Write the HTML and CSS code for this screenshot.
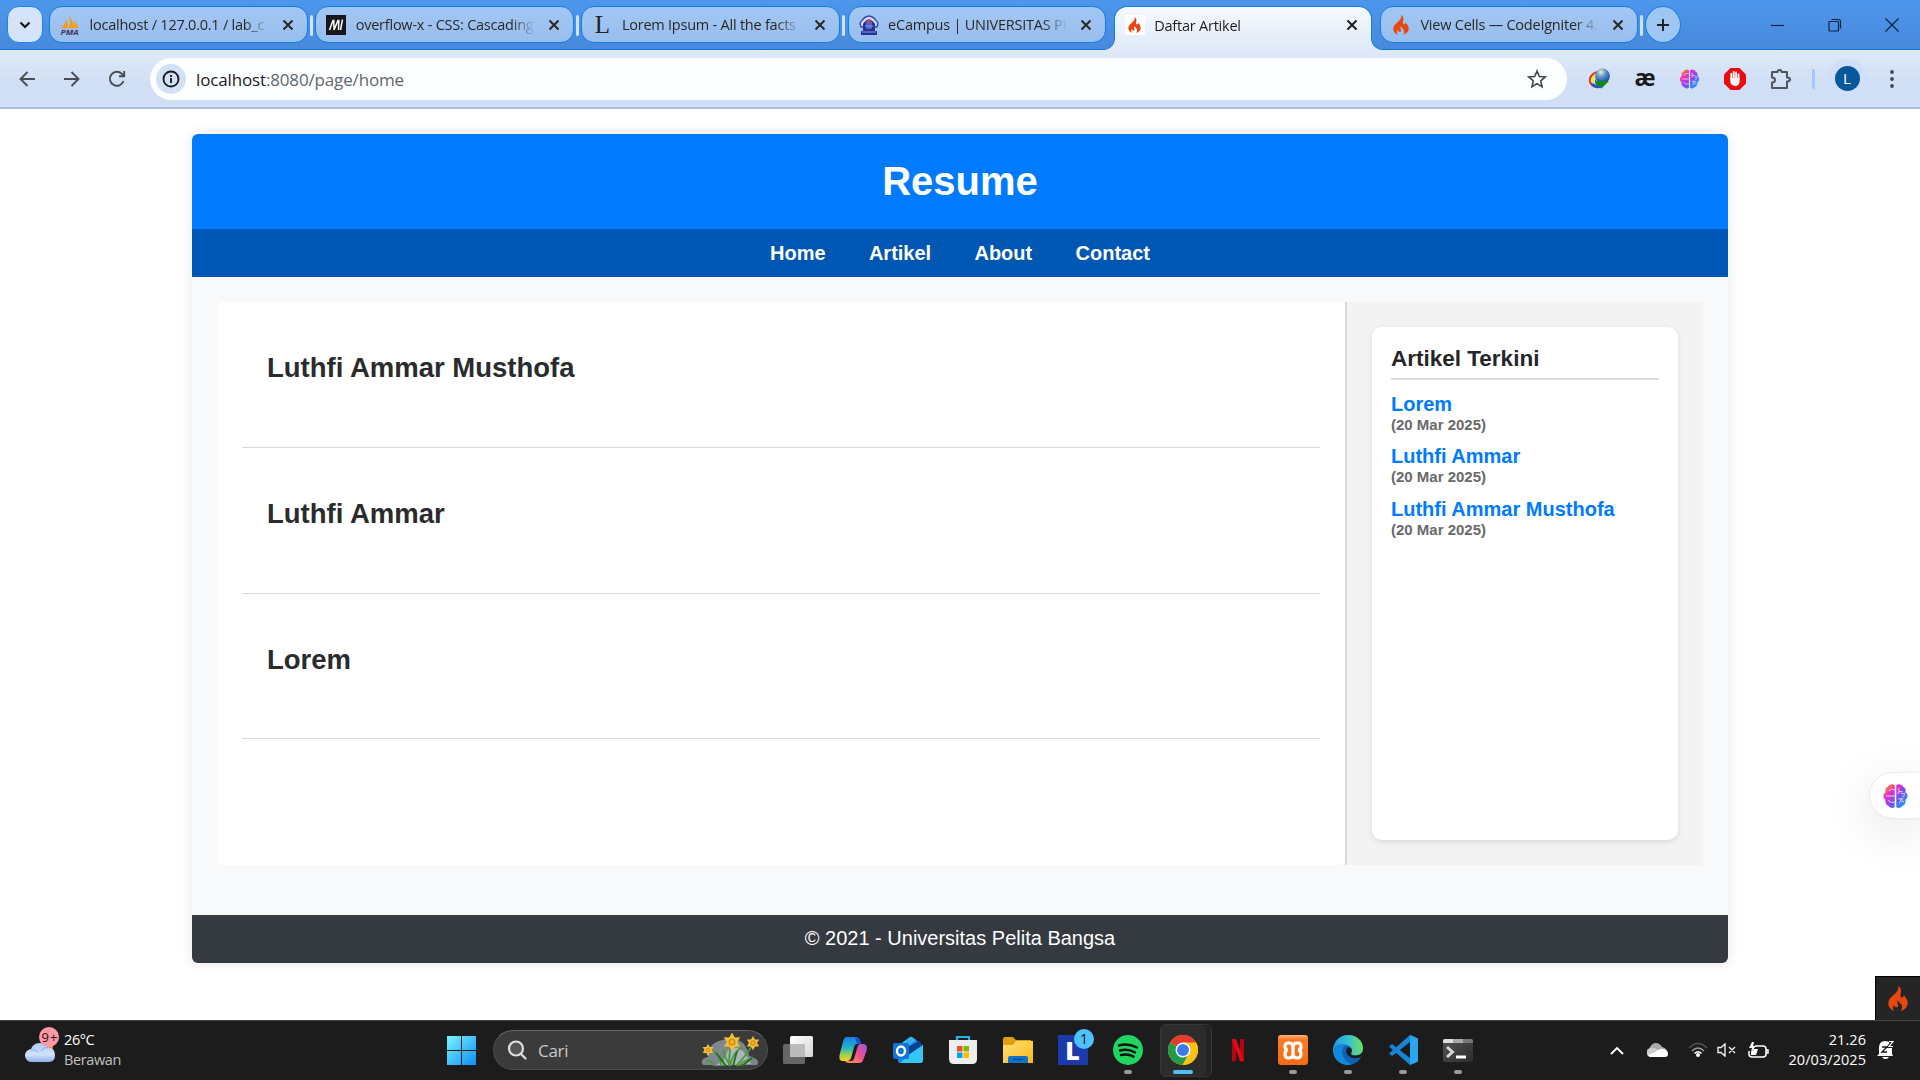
FILE: index.html
```html
<!DOCTYPE html>
<html lang="id">
<head>
<meta charset="utf-8">
<title>Daftar Artikel</title>
<link rel="stylesheet" href="styles.css">
</head>
<body>
<svg class="defs" width="0" height="0">
  <defs>
    <linearGradient id="gBrain" x1="0" y1="0" x2="1" y2="1"><stop offset=".1" stop-color="#ff8a1c"/><stop offset=".3" stop-color="#ee2fc4"/><stop offset=".58" stop-color="#7a4df0"/><stop offset=".9" stop-color="#12a4ff"/></linearGradient>
    <linearGradient id="gWin" x1="0" y1="0" x2="1" y2="1"><stop offset="0" stop-color="#7df3ff"/><stop offset="1" stop-color="#0a8ff5"/></linearGradient>
    <linearGradient id="gCloud" x1="0" y1="0" x2="0" y2="1"><stop offset="0" stop-color="#a9c8f8"/><stop offset=".6" stop-color="#d3e4fb"/><stop offset="1" stop-color="#8fb0ec"/></linearGradient>
    <linearGradient id="gFolder" x1="0" y1="0" x2="1" y2="1"><stop offset="0" stop-color="#ffe07a"/><stop offset="1" stop-color="#fbb917"/></linearGradient>
    <linearGradient id="gCopA" x1="0" y1="0" x2="0" y2="1"><stop offset="0" stop-color="#1a7fe8"/><stop offset=".45" stop-color="#22b5c9"/><stop offset=".75" stop-color="#9bd24a"/><stop offset="1" stop-color="#ffcf1e"/></linearGradient>
    <linearGradient id="gCopB" x1="1" y1="0" x2="0" y2="1"><stop offset="0" stop-color="#9a56ee"/><stop offset=".5" stop-color="#ee4f90"/><stop offset="1" stop-color="#ff9a50"/></linearGradient>
    <linearGradient id="gEdge" x1="0" y1="0" x2="1" y2="0"><stop offset="0" stop-color="#2398e0"/><stop offset=".5" stop-color="#35c1d4"/><stop offset="1" stop-color="#6ee05a"/></linearGradient>
    <linearGradient id="gXampp" x1="0" y1="0" x2="0" y2="1"><stop offset="0" stop-color="#ffb37a"/><stop offset=".15" stop-color="#fb7a24"/><stop offset="1" stop-color="#f46b12"/></linearGradient>
    <linearGradient id="gTerm" x1="0" y1="0" x2="1" y2="1"><stop offset="0" stop-color="#555"/><stop offset="1" stop-color="#2c2c2c"/></linearGradient>
    <linearGradient id="gView" x1="0" y1="0" x2="1" y2="1"><stop offset="0" stop-color="#fff"/><stop offset="1" stop-color="#d5d5d5"/></linearGradient>
    <radialGradient id="gGlobe" cx=".4" cy=".25" r=".8"><stop offset="0" stop-color="#f1f2b0"/><stop offset=".4" stop-color="#5d93d2"/><stop offset="1" stop-color="#123c8c"/></radialGradient>
    <symbol id="x" viewBox="0 0 12 12"><path d="M1.5 1.5l9 9M10.5 1.5l-9 9" fill="none" stroke="currentColor" stroke-width="2"/></symbol>
    <symbol id="flame" viewBox="0 0 20 25"><path d="M10.2 0C11 4.6 8.2 6.5 5 9.6 2 12.500.3 14.200.3 17.300.3 20.800 2.600 23.600 6.300 25 4.400 22.800 4.600 20.600 6.200 18.900c.2 1.600 1.100 2.400 2.200 2.400 2-.1 2.200-2 1.300-3.600-.6-1.200-.5-2.300.2-3.500.7 1.800 1.900 2.400 3.100 3.900 1.600 2 1.500 4.700-.4 6.900 4.200-1.400 7.100-4.100 7.100-8 0-2.900-1.700-5-4-7.900.1 1.200-.3 2.100-1.300 2.400-1.600.3-2.100-1-1.900-2.500C13 6 14 2.600 10.200 0z" fill="#e8480f"/></symbol>
    <symbol id="brain" viewBox="0 0 26 26"><path d="M12.200 1.500C10 0 6 .5 5 3.500 2.500 4.500 2 7 2.800 9-.3 11-.3 15 2.600 17c-.6 4 1.400 5.500 3 6.200C7.500 26 11 26 12.200 24.500zM13.800 1.500C16 0 20 .5 21 3.500c2.500 1 3 3.500 2.200 5.500 3.100 2 3.100 6 .2 8 .6 4-1.400 5.500-3 6.200-1.900 2.800-5.400 2.800-6.600 1.300z" fill="url(#gBrain)"/><path d="M12 6H8.500L6 8M3 13h9M5.500 17.500l2.500 2h4M16.500 5v3.500h4M17 8.500L15.500 11M19 10.500h4M20 14l3-2M16 16h5M19 16l-2 5M19 18l3 1" fill="none" stroke="#fff" stroke-width="1" opacity=".8"/></symbol>
    <g id="flower"><g fill="#f2c13a"><path d="M0 0L-3-4 0-9.500 3-4z"/><path d="M0 0L-3-4 0-9.500 3-4z" transform="rotate(60)"/><path d="M0 0L-3-4 0-9.500 3-4z" transform="rotate(120)"/><path d="M0 0L-3-4 0-9.500 3-4z" transform="rotate(180)"/><path d="M0 0L-3-4 0-9.500 3-4z" transform="rotate(240)"/><path d="M0 0L-3-4 0-9.500 3-4z" transform="rotate(300)"/></g><circle r="3.600" fill="#d98a14"/><circle r="1.900" fill="#f0b535"/></g>
  </defs>
</svg>

<header class="browser">
  <div class="tabstrip">
    <button class="tab-search"><svg width="12" height="8" viewBox="0 0 12 8"><path d="M1.500 1.500L6 6l4.500-4.500" fill="none" stroke="#111" stroke-width="2.200"/></svg></button>
    <nav class="tabs">
      <div class="tab"><svg class="fav" viewBox="0 0 20 21"><path d="M1 14Q5 10 6.500 4L8 14zM8.500 14Q11 7 9 0l7 14zM14 5q4 4 5 9h-3z" fill="#f89c0e"/><text x="0" y="20.500" class="pma" textLength="19" lengthAdjust="spacingAndGlyphs">PMA</text></svg><span class="label">localhost / 127.0.0.1 / lab_c</span><svg class="close"><use href="#x"/></svg></div>
      <div class="tab"><svg class="fav" viewBox="0 0 20 20"><rect width="20" height="20" fill="#15171c"/><path d="M3.500 15L7 5.500h.800L8 15l4-9.500h.800L12.500 15M16.500 4.500L14.500 15" fill="none" stroke="#fff" stroke-width="1.500"/></svg><span class="label">overflow-x - CSS: Cascading</span><svg class="close"><use href="#x"/></svg></div>
      <div class="tab"><span class="fav letter">L</span><span class="label">Lorem Ipsum - All the facts -</span><svg class="close"><use href="#x"/></svg></div>
      <div class="tab last"><svg class="fav" viewBox="0 0 20 20"><path d="M1 8Q10-6 19 8l-1 4H2z" fill="#d0d7ee" stroke="#3346a8" stroke-width="1.300"/><path d="M4 9q6-9 12 0v7h2v4H2v-4h2z" fill="#25309b"/><path d="M7 7q3-4 6 0v7H7z" fill="#5263bb"/><circle cx="10" cy="6" r="1.700" fill="#e33b3b"/><path d="M3 17h14M6 11h8" stroke="#8c9bdb"/></svg><span class="label">eCampus | UNIVERSITAS PELITA</span><svg class="close"><use href="#x"/></svg></div>
      <div class="tab active"><span class="fav white"><svg width="13" height="16"><use href="#flame"/></svg></span><span class="label">Daftar Artikel</span><svg class="close"><use href="#x"/></svg></div>
      <div class="tab"><svg class="fav"><use href="#flame"/></svg><span class="label">View Cells — CodeIgniter 4.6</span><svg class="close"><use href="#x"/></svg></div>
    </nav>
    <button class="new-tab"><svg width="14" height="14"><path d="M7 1v12M1 7h12" stroke="#222" stroke-width="2"/></svg></button>
    <div class="window-controls">
      <svg width="14" height="14"><path d="M0 7.500h13" stroke="#10233d" stroke-width="1.200"/></svg>
      <svg width="14" height="14" fill="none" stroke="#10233d" stroke-width="1.200"><rect x="1" y="3.500" width="9.500" height="9.500" rx="1"/><path d="M3.500 1.500h7q2 0 2 2v7"/></svg>
      <svg width="14" height="14"><path d="M.5 .5l13 13M13.500 .5l-13 13" stroke="#10233d" stroke-width="1.200"/></svg>
    </div>
  </div>
  <div class="toolbar">
    <div class="nav-icons">
      <svg width="20" height="20" viewBox="0 0 20 20"><path d="M18 10H4M10.500 3L3.500 10l7 7" class="ln"/></svg>
      <svg width="20" height="20" viewBox="0 0 20 20"><path d="M2 10h14M9.500 3l7 7-7 7" class="ln"/></svg>
      <svg width="20" height="20" viewBox="0 0 20 20"><path d="M16.500 12a7 7 0 1 1-1.600-7.100L17 7M17.200 2v5.200H12" class="ln"/></svg>
    </div>
    <div class="omnibox">
      <span class="info"><svg width="18" height="18" fill="none" stroke="#1b1d22" stroke-width="1.900"><circle cx="9" cy="9" r="7.500"/><path d="M9 8v5M9 5v2"/></svg></span>
      <span class="url">localhost<i>:8080/page/home</i></span>
      <svg width="20" height="20" viewBox="0 0 20 20"><path d="M10 2l2.300 5.500 5.900.5-4.500 3.900 1.400 5.800L10 14.600l-5.100 3.100 1.400-5.800L1.800 8l5.900-.5z" fill="none" stroke="#444950" stroke-width="1.600"/></svg>
    </div>
    <div class="extensions">
      <svg width="22" height="22" viewBox="0 0 22 22"><path d="M9 4C3 5 0 10 1 14q3 6 9 5" fill="none" stroke="#e02c1c" stroke-width="2"/><path d="M9 6C5 7 3 10 3 14" fill="none" stroke="#f7e51f" stroke-width="2.500"/><path d="M3 16q4 4 9 2" fill="none" stroke="#2056c8" stroke-width="3"/><circle cx="13.500" cy="8" r="7.400" fill="url(#gGlobe)"/><path d="M6 11q2 4 6 2h8l-8 8v-3q-7 1-6-7z" fill="#128a19"/></svg>
      <span class="ae">æ</span>
      <svg width="21" height="20"><use href="#brain"/></svg>
      <svg width="22" height="22" viewBox="0 0 22 22"><path d="M6.500 0h9L22 6.500v9L15.500 22h-9L0 15.500v-9z" fill="#e90d12"/><path d="M7.300 12V6M9.700 11V4M12.100 11V4.500M14.500 12V6.500" stroke="#fff" stroke-width="1.900" stroke-linecap="round"/><path d="M6.400 10h9.100v4q-.5 4-4.500 4-3 0-4.600-3z" fill="#fff"/></svg>
      <svg width="22" height="22" viewBox="0 0 22 22"><path d="M2 4h5.500q0-2 2-2t2 2H17v5.500q3 0 3 2t-3 2V20H2v-5.500q3 0 3-2.500T2 9.500z" fill="none" stroke="#50545b" stroke-width="2" stroke-linejoin="round"/></svg>
      <span class="divider"></span>
      <span class="avatar">L</span>
      <svg width="6" height="20"><g fill="#44484f"><circle cx="3" cy="3" r="1.900"/><circle cx="3" cy="10" r="1.900"/><circle cx="3" cy="17" r="1.900"/></g></svg>
    </div>
  </div>
</header>

<div class="viewport">
  <div class="container">
    <header class="site-header"><h1>Resume</h1></header>
    <nav class="site-nav"><a>Home</a><a>Artikel</a><a>About</a><a>Contact</a></nav>
    <section class="wrapper">
      <main class="main">
        <article class="entry"><h2>Luthfi Ammar Musthofa</h2></article>
        <article class="entry"><h2>Luthfi Ammar</h2></article>
        <article class="entry"><h2>Lorem</h2></article>
      </main>
      <aside class="sidebar">
        <div class="widget">
          <h3>Artikel Terkini</h3>
          <ul>
            <li><a>Lorem</a><small>(20 Mar 2025)</small></li>
            <li><a>Luthfi Ammar</a><small>(20 Mar 2025)</small></li>
            <li><a>Luthfi Ammar Musthofa</a><small>(20 Mar 2025)</small></li>
          </ul>
        </div>
      </aside>
    </section>
    <footer class="site-footer">© 2021 - Universitas Pelita Bangsa</footer>
  </div>
  <div class="assistant"><svg width="25" height="26"><use href="#brain"/></svg></div>
  <div class="debug"><svg width="20" height="25"><use href="#flame"/></svg></div>
</div>

<footer class="taskbar">
  <div class="weather">
    <svg width="34" height="37" viewBox="0 0 34 37"><circle cx="22" cy="20" r="6" fill="#f58a1f"/><path d="M7 35a6.500 6.500 0 0 1-1-13 9.500 9.500 0 0 1 17-1.500q7 0 7 8 0 6.500-6 6.500z" fill="url(#gCloud)"/><path d="M6 23q4-1 7 2M16 24q3-4 7-3.500" fill="none" stroke="#86a9e8"/><circle cx="24" cy="10" r="10" fill="#ff99a4"/><text x="16.500" y="15" class="nine" textLength="16">9+</text></svg>
    <div class="weather-text"><span>26°C</span><span class="muted">Berawan</span></div>
  </div>
  <div class="apps">
    <svg class="start" width="29" height="29"><path d="M0 0h14v14H0zM15 0h14v14H15zM0 15h14v14H0zM15 15h14v14H15z" fill="url(#gWin)"/></svg>
    <div class="search">
      <svg width="20" height="20" fill="none" stroke="#dcdfe3" stroke-width="2.200" stroke-linecap="round"><circle cx="9" cy="8.500" r="7" fill="#555"/><path d="M14 14l4.500 4.500"/></svg>
      <span>Cari</span>
      <svg class="bouquet" width="58" height="34" viewBox="0 0 58 34"><path d="M2 32q-4-6 5-8 0-14 14-17 14-4 22 4 5 8 5 12 12 3 8 9z" fill="#9fb0bb" opacity=".65"/><path d="M10 33q14-2 16-14Q38 6 50 31z" fill="#bccbd0" opacity=".7"/><g fill="none" stroke="#4b9b35" stroke-width="1.700"><path d="M28 33Q28 18 31 10M24 33Q20 20 7 17M35 33Q45 23 52 11M20 33q0-9-6-14M29 33q2-12 12-19M38 33q7-8 16-7M30 33Q22 23 23 17M15 33q-5-6-10-5"/></g><g stroke="#256c24" stroke-width="1.800"><path d="M25 33L15 20M32 33l4-15M41 33l10-8"/></g><use href="#flower" x="31" y="9"/><use href="#flower" transform="translate(7 17) scale(.65)"/><use href="#flower" transform="translate(52 10) scale(.75)"/></svg>
    </div>
    <div class="icons">
      <div class="app"><svg viewBox="0 0 30 30"><rect y="9" width="22" height="20" rx="1.500" fill="#666"/><rect x="7" y="1" width="23" height="21" rx="1.500" fill="url(#gView)"/><path d="M7 9h15v13H7z" fill="#bbb"/></svg></div>
      <div class="app"><svg viewBox="0 0 30 30"><path d="M8.500 2H18q3 0 4 4l1 3h-4q-2 0-2.600 2L13 23q-1 3-4 3H4q-4-1-2-8L5 7q1-5 3.500-5z" fill="url(#gCopA)"/><path d="M21.500 28H12q3-1 4-4l3.500-12q.5-3 3.500-3h3q4 1 2.500 7l-3 8q-1 4-4 4z" fill="url(#gCopB)"/><path d="M17 2q4 0 5 4l1 3h-4z" fill="#194fd0"/><path d="M7 26h6q2 0 3-2l-2 4H10q-2 0-3-2z" fill="#ff7d4d"/></svg></div>
      <div class="app"><svg viewBox="0 0 30 30"><path d="M5 11L17 2q1-.600 2 0l11 8v15q0 3-3 3H7q-2 0-2-2z" fill="#1887e8"/><path d="M6 10L17 2q1-.600 2 0l4 3-11 9z" fill="#35b3f0"/><path d="M13 13L26 6l4 4-15 10z" fill="#0a3f91"/><path d="M30 10v15q0 3-3 3H7l10-9z" fill="#36c6f5"/><rect y="8" width="16" height="16" rx="2" fill="#1074d6"/><ellipse cx="8" cy="16" rx="4" ry="4.500" fill="none" stroke="#fff" stroke-width="2.400"/></svg></div>
      <div class="app"><svg viewBox="0 0 30 30"><path d="M9 7V2h12v5" fill="none" stroke="#23b2ec" stroke-width="2.200"/><path d="M1 5h28v19q0 5-5 5H6q-5 0-5-5z" fill="#eee"/><path d="M9 5V3M21 5V3" stroke="#23b2ec" stroke-width="2"/><path d="M9 11h5.500v5.500H9z" fill="#f25022"/><path d="M15.500 11H21v5.500h-5.500z" fill="#7fba00"/><path d="M9 17.500h5.500V23H9z" fill="#00a4ef"/><path d="M15.500 17.500H21V23h-5.500z" fill="#ffb900"/></svg></div>
      <div class="app"><svg viewBox="0 0 30 30"><path d="M0 4q0-2 2-2h8l3 3h15v8H0z" fill="#dfa008"/><path d="M0 10h10l3-4h17v22H0z" fill="url(#gFolder)"/><path d="M5 28v-5q0-2 2-2h16q2 0 2 2v5z" fill="#1073c9"/><path d="M10 24.500h10" stroke="#0a4c91" stroke-width="1.500"/></svg></div>
      <div class="app"><span class="l-app">L</span><span class="badge">1</span></div>
      <div class="app open"><svg viewBox="0 0 30 30"><circle cx="15" cy="15" r="15" fill="#1ed760"/><path d="M6 10.500q9-2.500 18 2M7 15.500q8-2 15 2M8 20q7-1.500 12.500 1.700" fill="none" stroke="#111" stroke-width="2.500" stroke-linecap="round"/></svg></div>
      <div class="app current"><svg viewBox="0 0 30 30"><circle cx="15" cy="15" r="15" fill="#fbc116"/><path d="M15 15L2 7.500a15 15 0 0 1 26 0z" fill="#e33b2e"/><path d="M2 7.500A15 15 0 0 0 14.500 30L21 18.500z" fill="#219a49"/><path d="M15 7.500h13A15 15 0 0 1 14.500 30L21.500 18.500z" fill="#fbc116"/><circle cx="15" cy="15" r="7.500" fill="#fff"/><circle cx="15" cy="15" r="6" fill="#3b7ced"/></svg></div>
      <div class="app"><svg viewBox="0 0 30 30"><path d="M9 4h4v22l-4 .5zM17 4h4v22.500l-4-.5z" fill="#b1060f"/><path d="M9 4h4l8 22.500-4-.5z" fill="#e50914"/></svg></div>
      <div class="app open"><svg viewBox="0 0 30 30"><rect width="30" height="30" rx="3" fill="url(#gXampp)"/><path d="M10 8h1q4 0 4 4 0-4 4-4h1q3 0 3 3.500T20 15q3 .5 3 4t-3 4h-1q-4 0-4-4 0 4-4 4h-1q-3 0-3-4t3-4q-3 0-3-3.500T10 8zM15 12v7" fill="none" stroke="#fff" stroke-width="3.200"/></svg></div>
      <div class="app open"><svg viewBox="0 0 30 30"><circle cx="15" cy="15" r="15" fill="#0c64b8"/><path d="M0 15C1 5 8 0 15 0c9 0 15 6 15 13 0 5-4 7.500-8 7.500-4 0-5-1.500-3.500-3.500 1-2 .5-6-5-7C7 9 2 12 0 15z" fill="url(#gEdge)"/><path d="M0 15C2 9 9 8 13.500 10 9 11 8 17 10 21q2 6 9 8.500C8 32 0 24 0 15z" fill="#1688db"/><path d="M15.500 12q-4 3-1.500 7 4 6 13 3.500l2-1.500 1 4V17q-3 3.500-8 3.500-5 0-3.500-3.500 1.500-3-3-5z" fill="#1c1c1c"/></svg></div>
      <div class="app open"><svg viewBox="0 0 30 30"><path d="M22 0l8 3.500v23L22 30 1 11.500 4 9l18 14V7L4 21l-3-2.500z" fill="#1686d4"/><path d="M22 0l8 3.500v23L22 30z" fill="#2ba5ee"/></svg></div>
      <div class="app open"><svg viewBox="0 0 30 30"><rect y="4" width="30" height="23" rx="2" fill="url(#gTerm)"/><path d="M0 8V6q0-2 2-2h8v4z" fill="#ddd"/><path d="M10 4h10v4H10z" fill="#aaa"/><path d="M20 4h8q2 0 2 2v2H20z" fill="#777"/><path d="M4 12l5.500 5L4 22" fill="none" stroke="#d8d8d8" stroke-width="3"/><path d="M13 22h10" stroke="#fff" stroke-width="3"/></svg></div>
    </div>
  </div>
  <div class="tray">
    <svg width="14" height="9"><path d="M1 8l6-6 6 6" fill="none" stroke="#fff" stroke-width="1.900"/></svg>
    <svg class="onedrive" width="21" height="14" viewBox="0 0 21 14"><path d="M3 9a6 6 0 0 1 12-5q5 1 5 6z" fill="#aaa"/><path d="M4 14a4 4 0 0 1 0-9q4-1 7 2l8 6z" fill="#ccc"/><path d="M4 14q-2 0-3-2 6-2 10-5 4-2 6-1 4 1 4 5 0 3-3 3z" fill="#fff"/></svg>
    <svg class="wifi" width="20" height="16" viewBox="0 0 20 16" fill="none" stroke-width="1.500"><path d="M1 6q9-9 18 0" stroke="#555"/><path d="M4 9q6-6 12 0" stroke="#999"/><path d="M6.500 11.500q3.500-3.500 7 0" stroke="#fff"/><circle cx="10" cy="13" r="2" fill="#fff"/></svg>
    <svg class="sound" width="20" height="14" viewBox="0 0 20 14" fill="none" stroke="#eee" stroke-width="1.400"><path d="M1 4.500h3L8 1v12L4 9.500H1zM12 4l6 6M18 4l-6 6"/></svg>
    <svg class="battery" width="21" height="17" viewBox="0 0 21 17" fill="none" stroke="#fff" stroke-width="1.500"><path d="M7 4h8q3 0 3 3v5q0 3-3 3H4q-3 0-3-3V9M18 8h2v3h-2"/><path d="M6 7h4l-2 6H3v-3zM4 0L1 6h3L3 10l5-6H5l1-4z" fill="#fff" stroke="none"/></svg>
    <div class="clock"><span>21.26</span><span>20/03/2025</span></div>
    <svg class="bell" width="18" height="20" viewBox="0 0 18 20"><path d="M2 14V8q0-7 6-7 7 0 7 7v6l1 2H0zM5 17h7q-1 2-3.500 2T5 17z" fill="#fff"/><path d="M5 7h5l-5 5h5" fill="none" stroke="#1c1c1c" stroke-width="1.400"/><path d="M12 1.500h4l-4 5h4" fill="none" stroke="#1c1c1c" stroke-width="3.200"/><path d="M12 1.500h4l-4 5h4" fill="none" stroke="#fff" stroke-width="1.200"/></svg>
  </div>
</footer>
</body>
</html>
```

FILE: styles.css
```css
* { box-sizing: border-box; }
body { margin: 0; width: 1920px; height: 1080px; overflow: hidden; display: flex; flex-direction: column; background: #fff; font-family: "Liberation Sans", Arial, sans-serif; }
button { border: 0; padding: 0; margin: 0; }
svg { display: block; flex: none; }
.defs { position: absolute; }

/* browser chrome */
.browser { height: 109px; flex: none; font-family: "Open Sans", "Noto Sans", sans-serif; }
.tabstrip { height: 50px; display: flex; align-items: flex-start; padding: 6px 21px 0 7px; background: linear-gradient(#4d96ec, #4889dc); border-bottom: 1px solid #0b76dc; }
.tab-search { width: 36px; height: 37px; border-radius: 12px; background: #d5e3f8; border: 1px solid #1984ed; display: grid; place-items: center; margin-right: 6px; }
.tabs { display: flex; gap: 7.700px; }
.tab { position: relative; width: 258.500px; height: 37px; display: flex; align-items: center; padding: 0 13px 0 10px; border: 1px solid #0f7ee5; border-radius: 13px; background: linear-gradient(#a3c7f4, #98beee); color: #2c2722; }
.tab:not(.active):not(.last)::after { content: ""; position: absolute; right: -6px; top: 8px; width: 3px; height: 21px; border-radius: 2px; background: #cde2fb; }
.tab.active { height: 44px; padding-bottom: 7px; border-bottom: 0; border-radius: 13px 13px 0 0; background: linear-gradient(#f7fafe, #dfe9f8); color: #1d1d20; }
.tab.active::before, .tab.active::after { content: ""; position: absolute; bottom: 0; width: 12px; height: 12px; }
.tab.active::before { left: -12px; background: radial-gradient(circle at 0 0, transparent 11px, #0b76dc 11.500px, #dfe9f8 12.500px); }
.tab.active::after { right: -12px; background: radial-gradient(circle at 100% 0, transparent 11px, #0b76dc 11.500px, #dfe9f8 12.500px); }
.fav { width: 20px; height: 20px; margin-right: 9.500px; flex: none; overflow: visible; }
.fav.letter { font: 25px/20px "Liberation Serif", serif; text-align: center; color: #222; }
.fav.white { background: #fff; display: grid; place-items: center; }
.pma { font: italic bold 8px "Open Sans", sans-serif; fill: #3a3566; }
.label { width: 180px; padding-top: 1px; overflow: hidden; white-space: nowrap; font-size: 14.500px; letter-spacing: -.23px; line-height: 24px; -webkit-mask-image: linear-gradient(90deg, #000 155px, transparent 179px); mask-image: linear-gradient(90deg, #000 155px, transparent 179px); }
.close { width: 12px; height: 12px; margin-left: auto; }
.new-tab { width: 36px; height: 37px; border-radius: 50%; background: #9fc5f3; border: 1px solid #0f7ee5; display: grid; place-items: center; margin-left: 7px; }
.window-controls { margin-left: auto; height: 37px; display: flex; align-items: center; gap: 43px; }

.toolbar { height: 59px; display: flex; align-items: center; padding: 0 24px 0 17px; background: linear-gradient(#dfe9f8, #d0dff6 60%); border-bottom: 2px solid #afbdd6; }
.nav-icons { display: flex; gap: 25px; width: 133px; }
.ln { fill: none; stroke: #484c53; stroke-width: 1.900; }
.omnibox { width: 1417px; height: 42px; border-radius: 21px; background: #fdfeff; display: flex; align-items: center; padding: 0 20px 0 6px; }
.info { width: 30px; height: 30px; border-radius: 50%; background: #d3e1f7; display: grid; place-items: center; margin-right: 10px; }
.url { flex: 1; padding-top: 1px; font-size: 17px; letter-spacing: -.15px; color: #1d2024; }
.url i { font-style: normal; color: #62666c; }
.extensions { flex: 1; display: flex; align-items: center; gap: 24px; padding-left: 22px; }
.ae { font-size: 23px; line-height: 20px; font-weight: 700; color: #1a1a1a; padding-bottom: 4px; width: 20px; display: flex; justify-content: center; }
.divider { width: 3px; height: 20px; background: #a6c8f3; border-radius: 1px; margin: 0 -4px 0 -4.500px; }
.avatar { width: 25px; height: 25px; border-radius: 50%; background: #06579c; color: #fff; font-size: 15px; line-height: 25px; display: grid; place-items: center; box-shadow: 0 0 0 7px #cfdff7; margin-right: 5.500px; }

/* page */
.viewport { position: relative; flex: none; height: 911px; padding-top: 25px; background: #fff; }
.container { width: 1536px; margin: 0 auto; border-radius: 6px; overflow: hidden; background: #f8f9fb; box-shadow: 0 0 13px rgba(0, 0, 0, .1); }
.site-header { height: 95px; padding-bottom: 2px; display: grid; place-items: center; background: #007bff; color: #fff; }
h1, h2, h3, ul { margin: 0; padding: 0; }
h1 { font-size: 40px; line-height: 46px; }
.site-nav { height: 48px; background: #0056b3; color: #fff; display: flex; align-items: center; justify-content: center; gap: 43.300px; font-size: 20px; font-weight: 700; }
.wrapper { display: flex; padding: 25px 25px 50px; height: 638px; }
.main { width: 1128px; background: #fff; border-radius: 6px; padding: 25px; }
.entry { height: 145.600px; padding: 50px 25px 25px; border-bottom: 1px solid #d9d9d9; }
.entry:first-child { height: 121px; padding-top: 25px; }
h2 { font-size: 27.500px; line-height: 32px; color: #292b2d; }
.sidebar { flex: 1; background: #f3f3f3; border-left: 2px solid #d9d9d9; padding: 25px; }
.widget { height: 100%; background: #fff; border-radius: 10px; padding: 19px; box-shadow: 0 2px 6px rgba(0, 0, 0, .1); }
h3 { font-size: 22.500px; line-height: 25px; color: #252628; padding-bottom: 7px; border-bottom: 2px solid #dcdcdc; }
ul { list-style: none; padding-top: 12.500px; }
li { height: 52.500px; display: flex; flex-direction: column; font-weight: 700; }
li a { color: #007bff; font-size: 20px; line-height: 23px; }
li small { color: #69696b; font-size: 15px; line-height: 18px; }
.site-footer { height: 48px; padding-bottom: 2px; display: grid; place-items: center; background: #343a40; color: #fff; font-size: 20px; }
.assistant { position: absolute; right: 0; top: 664px; width: 50px; height: 45px; border-radius: 23px 0 0 23px; background: #fff; display: grid; place-items: center; box-shadow: 0 12px 50px rgba(0, 0, 0, .12), 0 0 2px rgba(0, 0, 0, .15); }
.debug { position: absolute; right: 0; bottom: 0; width: 45px; height: 44px; background: #252525; border: solid #000; border-width: 1px 0 0 1px; display: grid; place-items: center; }

/* taskbar */
.taskbar { height: 60px; flex: none; display: flex; background: #1c1c1c; border-top: 1px solid #454545; color: #fff; font-family: "Open Sans", "Noto Sans", sans-serif; }
.weather { width: 447px; padding: 6px 0 0 25px; display: flex; gap: 5px; }
.nine { font: 13px "Open Sans", sans-serif; fill: #241215; }
.weather-text { display: flex; flex-direction: column; font-size: 14.500px; line-height: 20px; padding-top: 3px; letter-spacing: -.4px; }
.muted { color: #c2c2c2; }
.apps { display: flex; align-items: center; padding-bottom: 1px; }
.start { margin-right: 17px; }
.search { width: 275px; height: 40px; border-radius: 20px; background: #3b3b3b; border: 1px solid #4c4c4c; border-top-color: #666; display: flex; align-items: center; padding: 0 8px 0 13px; gap: 11px; font-size: 17px; color: #c9c9c9; letter-spacing: -.3px; }
.bouquet { margin-left: auto; }
.icons { display: flex; margin-left: 2px; }
.app { position: relative; width: 55px; height: 58px; display: flex; align-items: center; justify-content: center; }
.app svg { position: relative; width: 30px; height: 30px; }
.app.open::after { content: ""; position: absolute; bottom: 5px; width: 8px; height: 4px; border-radius: 2px; background: #999; }
.app.current::before { content: ""; position: absolute; left: 5px; top: 3px; width: 50px; height: 51px; border: 1px solid #373737; border-radius: 6px; background: #2c2c2c; box-shadow: inset -5px 0 #232323; }
.app.current::after { content: ""; position: absolute; bottom: 5px; width: 20px; height: 4px; border-radius: 2px; background: #4cc2ff; }
.l-app { width: 30px; height: 30px; background: #1b3bad; display: grid; place-items: center; font-size: 25px; font-weight: 800; line-height: 30px; }
.badge { position: absolute; left: 29px; top: 8px; width: 20px; height: 20px; border-radius: 50%; background: #4cc2ff; color: #111; font-size: 14px; line-height: 20px; text-align: center; }
.tray { margin-left: auto; margin-right: 25px; padding-bottom: 1px; display: flex; align-items: center; }
.onedrive { margin-left: 23px; }
.wifi { margin-left: 20px; }
.sound { margin-left: 9px; }
.battery { margin-left: 11px; }
.clock { width: 97px; display: flex; flex-direction: column; align-items: flex-end; font-size: 14.500px; line-height: 20px; letter-spacing: .05px; margin-right: 11px; }
```
